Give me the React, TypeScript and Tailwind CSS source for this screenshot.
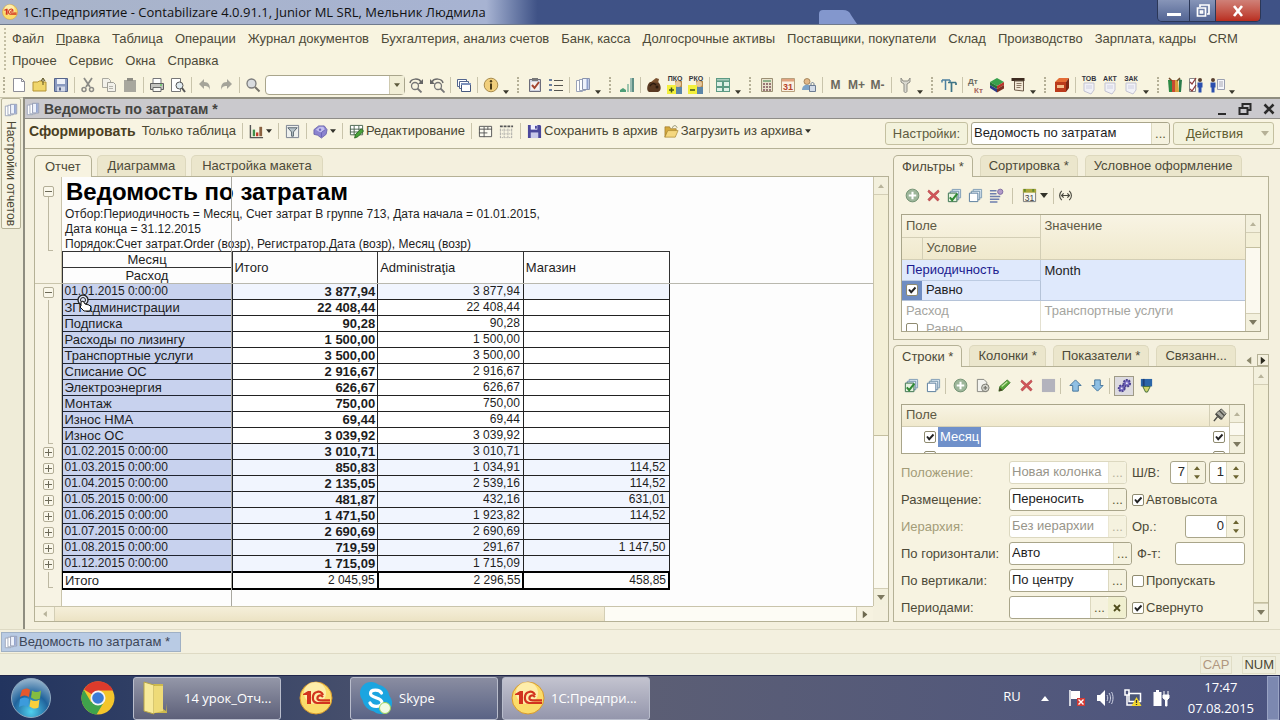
import React from "react";

type Kids = { children?: React.ReactNode };

const sheetIcon = (
  <>
    <path d="M1.5 3.5h6v11h-6z" fill="#fff" stroke="#9aa3b8" />
    <path d="M4.5 2.5h6v11h-6z" fill="#fff" stroke="#9aa3b8" />
    <path d="M7.5 1.5h7v11h-7z" fill="#eef2fb" stroke="#8a94ae" />
    <path d="M12.5 2v10" stroke="#8fa0cc" strokeWidth="2" />
  </>
);

const stackBack = (
  <>
    <path d="M5.5 1.5h9v9h-9z" fill="#dbe8f2" stroke="#7f9db5" />
    <path d="M3.5 3.5h9v9h-9z" fill="#eaf2f8" stroke="#6f8fa8" />
    <path d="M1.5 5.5h9v9h-9z" fill="#fff" stroke="#54799a" />
  </>
);

const person = (x: number, c: string) => (
  <>
    <circle cx={x} cy="3" r="2" fill="#5a4030" />
    <path d={`M${x - 2.5} 5.5h5v5h-1v5h-3v-5h-1z`} fill={c} />
  </>
);

const icons: Record<string, React.ReactNode> = {
  new: <><path d="M2.5 1.5h8l3 3v10h-11z" fill="#fff" stroke="#8d8d96" /><path d="M10.500 1.500v3h3" fill="none" stroke="#8d8d96" /></>,
  open: <><path d="M1 5h5l1-1h3v1h4v9H1z" fill="#f0d66b" stroke="#b39234" /><path d="M11 8V2M9 4l2-3 2 3" fill="none" stroke="#5c5322" /></>,
  save: <><path d="M1.500 1.500h13v13h-13z" fill="#8b9bc0" stroke="#56658c" /><path d="M4 2h8v5H4z" fill="#eef1f8" /><path d="M4 9.500h8v5H4z" fill="#d3d9e8" /><path d="M6 10.500h2v3H6z" fill="#56658c" /></>,
  cut: <><path d="M4 1l6 9M12 1L6 10" stroke="#8b8b86" strokeWidth="1.800" /><circle cx="4" cy="12.500" r="2" fill="none" stroke="#8b8b86" strokeWidth="1.500" /><circle cx="11.500" cy="12.500" r="2" fill="none" stroke="#8b8b86" strokeWidth="1.500" /></>,
  copy: <><path d="M1.500 1.500h6l2 2v7h-8z" fill="#f2f1ea" stroke="#aaa99f" /><path d="M6.500 5.500h6l2 2v7h-8z" fill="#f2f1ea" stroke="#a09f97" /><path d="M8 9.500h4M8 11.500h4" stroke="#b5b4ac" /></>,
  paste: <><path d="M2 3h12v12H2z" fill="#a8a79e" /><path d="M5 1h6v3H5z" fill="#8e8d85" /></>,
  print: <><path d="M4 1.500h8v5H4z" fill="#fff" stroke="#77777a" /><path d="M1.500 6.500h13v6h-13z" fill="#c3c3bf" stroke="#5f5f5f" /><path d="M4 10.500h8v4H4z" fill="#f8f8f3" stroke="#6a6a6a" /><path d="M11 8h2" stroke="#3c3" /></>,
  preview: <><path d="M1.500 1.500h9v13h-9z" fill="#fff" stroke="#777" /><circle cx="9.500" cy="8.500" r="3.500" fill="#dfeaf0" stroke="#555" /><path d="M12 11l3 4" stroke="#555" strokeWidth="2" /></>,
  undo: <><path d="M2 7l5-5v3c5 0 6 3 6 8-1-3-2-4-6-4v3z" fill="#a5a49a" /></>,
  redo: <><path d="M14 7L9 2v3c-5 0-6 3-6 8 1-3 2-4 6-4v3z" fill="#a5a49a" /></>,
  search: <><circle cx="6.500" cy="6.500" r="4.500" fill="#d9dcdf" stroke="#7c7c7c" strokeWidth="1.300" /><path d="M10 10l4.500 4.500" stroke="#77736a" strokeWidth="2" /></>,
  findNext: <><circle cx="7" cy="9" r="3.500" fill="none" stroke="#777" strokeWidth="1.300" /><path d="M9.500 11.500l4 4" stroke="#777" strokeWidth="1.800" /><path d="M2 6c1-5 9-5 11-1" fill="none" stroke="#6b6b6b" strokeWidth="1.500" /><path d="M15 2v5h-5z" fill="#666" /></>,
  findPrev: <><circle cx="9" cy="9" r="3.500" fill="none" stroke="#777" strokeWidth="1.300" /><path d="M11.500 11.500l4 4" stroke="#777" strokeWidth="1.800" /><path d="M14 6c-1-5-9-5-11-1" fill="none" stroke="#6b6b6b" strokeWidth="1.500" /><path d="M1 2v5h5z" fill="#666" /></>,
  windows: <><path d="M1.500 2.500h9v7h-9z" fill="#fff" stroke="#53658e" /><path d="M3.500 4.500h9v7h-9z" fill="#fff" stroke="#53658e" /><path d="M5.500 6.500h9v8h-9z" fill="#fff" stroke="#46587f" /><path d="M5 7h10" stroke="#7f93bd" strokeWidth="2" /></>,
  info: <><circle cx="8" cy="8" r="6.800" fill="#f1cf7c" stroke="#a98c4c" /><path d="M8 6.500v6" stroke="#4a3b17" strokeWidth="2" /><circle cx="8" cy="4.200" r="1.200" fill="#4a3b17" /></>,
  clipboard: <><path d="M2.500 2.500h11v12h-11z" fill="#cfd3df" stroke="#6c6c7a" /><path d="M5 1h6v3H5z" fill="#777" /><path d="M4 5h8v8H4z" fill="#f6f1ee" /><path d="M5 8l2.500 3L12 5" fill="none" stroke="#a3452f" strokeWidth="2" /></>,
  list: <><path d="M1 3h3M1 8h3M1 13h3" stroke="#6b7f9e" strokeWidth="2" /><path d="M6 3.500h9M6 8.500h9M6 13.500h9" stroke="#55554f" /></>,
  sheets: sheetIcon,
  chart: <><path d="M1 13l3-2 3 2v2H1z" fill="#4e9f78" /><path d="M8 7h2v8H8z" fill="#9fc6ae" /><path d="M11 1h4v14h-4z" fill="#5f8f86" /><path d="M11 1h2v14h-2z" fill="#9cbcb2" /></>,
  bag: <><path d="M4 5c-3 2-4 9-1 10h9c4-1 3-8 0-10z" fill="#5a3a22" /><path d="M5 5l5-4 3 1-1 4z" fill="#7a5230" /><path d="M4 9c2-3 4-3 6-1" stroke="#2c1a0d" fill="none" strokeWidth="1.500" /><circle cx="11" cy="10" r="1.500" fill="#2c1a0d" /></>,
  tableWin: <><path d="M1 1h14v14H1z" fill="#5c9a84" /><path d="M2 5h5v4H2zM9 5h5v4H9zM2 11h5v3H2zM9 11h5v3H9z" fill="#def0e6" /><path d="M2 2h12v1.500H2z" fill="#a9cdbd" /></>,
  calc: <><path d="M2.500 1.500h11v13h-11z" fill="#e9e3cd" stroke="#9b8f74" /><path d="M4 3h8v2H4z" fill="#8fb08a" /><path d="M5 6v8M8 6v8M11 6v8" stroke="#977" strokeDasharray="2 1" strokeWidth="2" /></>,
  calendar: <><path d="M1.500 1.500h13v13h-13z" fill="#faf1e2" stroke="#b9a07d" /><path d="M2 2h12v2.500H2z" fill="#e0a27e" /><text x="8" y="13" textAnchor="middle" fontSize="9" fontWeight="700" fill="#b8452a">31</text></>,
  userLock: <><circle cx="6" cy="4.500" r="3" fill="#e2b888" stroke="#8b6a3f" strokeWidth=".7" /><path d="M1 13c0-7 10-7 10 0z" fill="#7da4c8" /><path d="M8.500 8.500h6v6h-6z" fill="#d2dbe8" stroke="#6d7c92" /><path d="M10 8.500V7c0-2 3-2 3 0v1.500" fill="none" stroke="#6d7c92" /></>,
  wrench: <><path d="M4 1v4l3 2v7c0 2 3 2 3 0V7l3-2V1l-2 3H6z" fill="#d9d8cf" stroke="#8f8e86" /></>,
  tt: <><path d="M1 3h8M4.500 3v10M1 3v2.500M9 3v2.500" stroke="#4e80a0" strokeWidth="1.500" fill="none" /><path d="M7 5.500h8M10.500 5.500V15M15 5.500V8" stroke="#3e7486" strokeWidth="1.700" fill="none" /></>,
  books: <><path d="M1 5l7-4 7 4-7 4z" fill="#38a04c" /><path d="M1 5l7 4v3L1 8z" fill="#237436" /><path d="M1 8l7 4v3.500L1 11z" fill="#2a3a88" /><path d="M8 9l7-4v3l-7 4z" fill="#b9352b" /><path d="M8 12l7-4v3.500l-7 4z" fill="#7d2f22" /></>,
  report: <><path d="M1.500 2.500h13" stroke="#3d2a20" strokeWidth="3" /><path d="M4.500 4h9v10l-9-1z" fill="#f2e8d6" stroke="#6d5c4a" /><path d="M6.500 6.500h5M6.500 8.500h5M6.500 10.500h4" stroke="#8c7a66" /></>,
  ledger: <><path d="M1 5l4-4h10l-3 4z" fill="#e46c35" /><path d="M1 5h11v10H1z" fill="#bb3b1c" /><path d="M12 5l3-4v10l-3 4z" fill="#7d2714" /><path d="M3 8h7v3H3z" fill="#f4c08e" /></>,
  folders: <><path d="M1 3h4v12H2z" fill="#2e8a44" /><path d="M5 3h3v12H5z" fill="#c94b32" /><path d="M8 3h3l1 12H8z" fill="#d9a03c" /><path d="M12 2l3 1-1 12h-2z" fill="#2c7c4c" /><path d="M2 1l3 3M13 1l-3 3" stroke="#734b2b" strokeWidth="1.500" /></>,
  checkPerson: <><path d="M1.500 1.500h6v13h-6z" fill="#fff" stroke="#888" /><path d="M2 5l2 2 4-6M2 12l2 2 4-6" fill="none" stroke="#8c3b3b" strokeWidth="1.300" />{person(12, "#2b4fae")}</>,
  personDoc: <><path d="M8.500 2.500h7v10h-7z" fill="#f5f6fa" stroke="#9a9fb0" /><path d="M10 5h4M10 7h4M10 9h4" stroke="#a8a8b5" />{person(4, "#2b4fae")}</>,
  barChart: <><path d="M1.500 1v13.500H15" fill="none" stroke="#555" strokeWidth="1.500" /><path d="M4 6h2.500v7H4z" fill="#3f8f4b" /><path d="M7.500 9H10v4H7.500z" fill="#c03a2a" /><path d="M11 3h3v10h-3z" fill="#8a6140" /></>,
  filter: <><path d="M1.500 1.500h13v13h-13z" fill="#eef0ee" stroke="#777f8d" /><path d="M3 4h10l-4 4.500V13H7V8.500z" fill="#b7c3c9" stroke="#57646e" /></>,
  purple: <><path d="M1 6l5-4h6l3 4-1 5-5 4-4-3-4-1z" fill="#8b83cf" stroke="#5e57a4" strokeWidth=".8" /><path d="M3 6l4-3h4l2 3-4 3-3-1z" fill="#c3bfee" /><path d="M9 9v5M9 9l4-3" stroke="#6760b4" fill="none" /><circle cx="7.500" cy="6" r="1.300" fill="#6f67bd" /></>,
  edit: <><path d="M1.500 1.500h13v10h-13zM1 5.500h14M1 8.500h9M5.500 2v10M10.500 2v5" fill="#fff" stroke="#4b6450" /><path d="M6 15l1-4 6-6 2.500 2.500-6 6z" fill="#49a33a" stroke="#2b6a22" /></>,
  grid1: <><path d="M1.500 2.500h13v11h-13z" fill="#fbfaf0" stroke="#555" /><path d="M1 5.500h14M6.500 3v11M1 9.500h9M10.500 3v3" stroke="#555" /></>,
  grid2: <><path d="M1 2.500h14" stroke="#555" strokeWidth="2" strokeDasharray="3 1" /><path d="M1.500 5v10M5.500 5v10M9.500 5v10M13.500 5v10M1 6.500h14M1 10.500h14M1 14.500h14" stroke="#999" strokeDasharray="1 1" /></>,
  disk: <><path d="M1 1h13l1 1v13H1z" fill="#4b489c" /><path d="M4 1h7v5H4z" fill="#f2f2ff" /><path d="M4 9h8v6H4z" fill="#c8c8ea" /><path d="M8.500 2h2v3h-2z" fill="#4b489c" /></>,
  folderOpen: <><path d="M1 3h5l1 2h6v3H4l-3 6z" fill="#d5a93d" stroke="#97762a" strokeWidth=".7" /><path d="M1 14l3-7h11l-3 7z" fill="#f5d77e" stroke="#a5832e" strokeWidth=".7" /><path d="M9 4c1-3 4-3 5 0" fill="none" stroke="#8a8a6a" /></>,
  add: <><circle cx="8" cy="8" r="6.800" fill="#9db69a" stroke="#6f8f70" /><path d="M8 4v8M4 8h8" stroke="#fff" strokeWidth="2.200" /></>,
  del: <path d="M3 2l5 4.500L13 2l1 2-4 4 4 4-1.500 2L8 9.500 3.500 14 2 12l4-4-4-4z" fill="#d2565a" stroke="#a83b40" strokeWidth=".6" />,
  checkAll: <>{stackBack}<path d="M1.500 5.500h9v9h-9z" fill="#e6f2e2" stroke="#4c7f55" /><path d="M3 10l2.500 3L11 6" fill="none" stroke="#2f8a34" strokeWidth="2.200" /></>,
  uncheckAll: stackBack,
  rows: <><path d="M1 3h7M1 6h7M1 9h11M1 12h10M1 15h8" stroke="#6d7fae" strokeWidth="1.600" /><circle cx="12" cy="4" r="2.800" fill="#b29ac8" stroke="#7c6ba0" /></>,
  date: <><path d="M1.500 1.500h13v13h-13z" fill="#f7f6ee" stroke="#777" /><path d="M1 1h14v4H1z" fill="#a9a63a" /><path d="M3 1v3M12 1v3" stroke="#5f8a2b" strokeWidth="2" /><text x="8" y="13.500" textAnchor="middle" fontSize="9" fill="#444">31</text></>,
  range: <path d="M4 3c-3 3-3 7 0 10M12 3c3 3 3 7 0 10M4 8h8M6 5.800L3.800 8 6 10.200M10 5.800L12.200 8 10 10.200" fill="none" stroke="#4a4a40" strokeWidth="1.300" />,
  addDoc: <><path d="M2.500 1.500h7l3 3v10h-10z" fill="#f3f3ee" stroke="#85857f" /><circle cx="11" cy="10.500" r="4" fill="#d5d5cd" stroke="#77776f" /><path d="M11 8.500v4M9 10.500h4" stroke="#77776f" strokeWidth="1.400" /></>,
  pencil: <><path d="M2 14l1-5 8-7 3 3-8 8z" fill="#58a53a" stroke="#2f6b20" strokeWidth=".8" /><path d="M2 14l1-4 3 3z" fill="#4a3c24" /><path d="M5 9l6-5" stroke="#c4e6a4" strokeWidth="1.300" /></>,
  block: <path d="M1 1h14v14H1z" fill="#b3b3bd" />,
  up: <path d="M8 2l6 6h-3v6H5V8H2z" fill="#8fc0e4" stroke="#44749c" />,
  down: <path d="M8 14l6-6h-3V2H5v6H2z" fill="#8fc0e4" stroke="#44749c" />,
  gears: <><circle cx="10.500" cy="5.500" r="3.500" fill="#7c70c4" stroke="#4b4190" strokeWidth="2" strokeDasharray="2 1" /><circle cx="5" cy="11" r="3.200" fill="#7c70c4" stroke="#4b4190" strokeWidth="2" strokeDasharray="2 1" /><circle cx="10.500" cy="5.500" r="1" fill="#eceaf8" /><circle cx="5" cy="11" r="1" fill="#eceaf8" /></>,
  brush: <><path d="M2 1h12v8H2z" fill="#2b65a8" /><path d="M4 1h2v8H4z" fill="#1d3f78" /><path d="M4 9h8l-3 6H7z" fill="#cfd36b" stroke="#3d6a34" /></>,
  pin: <><path d="M5 5l5-4 5 5-4 5-2 1-5-5z" fill="#a9a9a0" stroke="#4c4c46" /><path d="M4 6l7 6M8 3l5 5" stroke="#4c4c46" strokeWidth="1.500" /><path d="M6 9l-4 5" stroke="#4c4c46" strokeWidth="1.500" /></>,
};

function Icon({ name, className = "size-4" }: { name: string; className?: string }) {
  return (
    <svg viewBox="0 0 16 16" className={`${className} shrink-0`} aria-hidden="true">
      {icons[name]}
    </svg>
  );
}

function Caret({ small, className = "" }: { small?: boolean; className?: string }) {
  return (
    <svg viewBox="0 0 8 5" className={`${small ? "h-1 w-1.5" : "h-[5px] w-2"} shrink-0 ${className}`} aria-hidden="true">
      <path d="M0 0h8L4 5z" fill="currentColor" />
    </svg>
  );
}

function Sep() {
  return <span className="h-4 w-px shrink-0 bg-[#c9c4ab]" />;
}

function TagIcon({ tag, name }: { tag: string; name: string }) {
  const minus = name === "rko";
  const doc = name === "doc";
  return (
    <svg viewBox="0 0 18 20" className="h-5 w-[18px] shrink-0" aria-hidden="true">
      {doc ? (
        <>
          <path d="M4 8h10v7l-3 4-7-3z" fill="#f1f1f6" stroke="#c3c3d2" />
          <path d="M6 11h6M6 13h6" stroke="#cfcfe0" />
        </>
      ) : (
        <>
          <path d="M9 6h7v13H9z" fill="#b58a4e" />
          <circle cx="12" cy="9" r="3" fill="#e7c79a" />
          <path d="M9 12h7v7H9z" fill="#5c86a8" />
          <path d="M1 10h9v9H1z" fill="#f3f03c" />
          <path d={minus ? "M3 15h5" : "M3 15h5M5.500 12.500v5"} stroke="#40551a" strokeWidth="1.500" />
        </>
      )}
      <text x="9" y="6" textAnchor="middle" fontSize="7" fontWeight="700" fill="#33333c">{tag}</text>
    </svg>
  );
}

const mainTools = (
  "| new open save / cut copy paste / print preview / undo redo / search [] findNext findPrev / windows / info v | " +
  "clipboard list / sheets v | chart / bag pko rko / tableWin v | calc calendar userLock / M M+ M- / wrench v | " +
  "tt / dtkt books report v | ledger / tov akt zak v | folders checkPerson personDoc v"
).split(" ");

function MainTool({ id, first }: { id: string; first: boolean }) {
  if (id === "/") return <span className="flex w-1.5 shrink-0 justify-center"><Sep /></span>;
  if (id === "|")
    return (
      <span className={`flex shrink-0 justify-center ${first ? "w-2" : "w-[13px]"}`}>
        <span className="h-4 w-0 border-l-2 border-dotted border-[#b5b097]" />
      </span>
    );
  if (id === "v")
    return (
      <button aria-label="Ещё" className="flex h-5 w-2.5 shrink-0 items-end justify-center pb-px text-[#3a382c]">
        <Caret small />
      </button>
    );
  if (id === "[]")
    return (
      <span className="ml-0.5 flex h-5 w-[140px] shrink-0 rounded-sm border border-[#a9a58c] bg-white">
        <input aria-label="Поиск" className="min-w-0 flex-1 bg-transparent px-1 outline-none" />
        <button aria-label="Список" className="flex w-[15px] items-center justify-center border-l border-[#cfcab0] bg-[#f1eed6] text-[#5d5a3c]">
          <Caret small />
        </button>
      </span>
    );
  const tags: Record<string, [string, string]> = {
    pko: ["ПКО", "pko"], rko: ["РКО", "rko"], tov: ["ТОВ", "doc"], akt: ["АКТ", "doc"], zak: ["ЗАК", "doc"],
  };
  return (
    <button aria-label={id} className="flex h-5 w-[21px] shrink-0 items-center justify-center text-[12px] font-bold text-[#6b685e]">
      {id[0] === "M" ? id : tags[id] ? (
        <TagIcon tag={tags[id][0]} name={tags[id][1]} />
      ) : id === "dtkt" ? (
        <svg viewBox="0 0 18 18" className="size-[18px]" aria-hidden="true">
          <text x="1" y="8" fontSize="8" fontWeight="700" fill="#6a6a62">Дт</text>
          <text x="7" y="17" fontSize="8" fontWeight="700" fill="#a5655c">Кт</text>
        </svg>
      ) : (
        <Icon name={id} />
      )}
    </button>
  );
}

function Tab({ children, active, wide }: Kids & { active?: boolean; wide?: boolean }) {
  return (
    <button
      role="tab"
      aria-selected={!!active}
      className={`shrink-0 whitespace-nowrap rounded-t-[5px] border border-b-0 text-[#4d4a38] ${wide ? "px-2.5" : "px-2"} ${
        active ? "relative -mb-px h-[22px] border-[#b5b196] bg-[#f7f3e1]" : "h-[21px] border-[#ddd8bd] bg-[#ebe6cc]"
      }`}
    >
      {children}
    </button>
  );
}

function Check({ label, defaultChecked, className = "" }: { label?: string; defaultChecked?: boolean; className?: string }) {
  return (
    <label className={`flex items-center gap-0.5 whitespace-nowrap text-[#4d4a38] ${className}`}>
      <span className="relative flex size-3 shrink-0">
        <input
          type="checkbox"
          aria-label={label ? undefined : "Использовать"}
          defaultChecked={defaultChecked}
          className="peer size-3 appearance-none rounded-[2px] border border-[#8f8b70] bg-white"
        />
        <svg viewBox="0 0 12 12" className="pointer-events-none absolute inset-0 hidden size-3 peer-checked:block">
          <path d="M3 5.500l2.200 2.700L9.500 3.500" fill="none" stroke="#222" strokeWidth="1.900" />
        </svg>
      </span>
      {label}
    </label>
  );
}

type FieldProps = { id: string; value: string; width: string; muted?: boolean; clear?: boolean; label?: string };

function Field({ id, value, width, muted, clear, label }: FieldProps) {
  return (
    <span className={`flex h-[23px] shrink-0 rounded-[3px] border bg-white ${width} ${muted ? "border-[#dcd8c0]" : "border-[#a9a58a]"}`}>
      <input
        id={id}
        aria-label={label}
        defaultValue={value}
        disabled={muted}
        className={`min-w-0 flex-1 bg-transparent pl-0.5 pb-0.5 outline-none ${muted ? "text-[#98958a]" : "text-[#1c1c1c]"}`}
      />
      <button
        aria-label="Выбрать"
        className={`w-[18px] rounded-r-[3px] border-l bg-[#f5f2df] ${muted ? "border-[#ebe7d2] text-[#b5b19c]" : "border-[#dcd8bf] text-[#5d5a33]"}`}
      >
        ...
      </button>
      {clear && (
        <button aria-label="Очистить" className="flex w-[18px] items-center justify-center rounded-r-[3px] bg-[#f0efcf]">
          <svg viewBox="0 0 8 8" className="size-2"><path d="M1 1l6 6M7 1L1 7" stroke="#4f4d1c" strokeWidth="1.800" /></svg>
        </button>
      )}
    </span>
  );
}

function Spin({ label, value, width }: { label: string; value: string; width: string }) {
  return (
    <span className={`flex h-[23px] shrink-0 rounded-[3px] border border-[#a9a58a] bg-white ${width}`}>
      <input aria-label={label} defaultValue={value} className="min-w-0 flex-1 bg-transparent pb-0.5 pr-0.5 text-right text-[#2a2a2a] outline-none" />
      <span className="flex w-[18px] flex-col items-center justify-evenly rounded-r-[3px] border-l border-[#dcd8bf] bg-[#f5f2df] text-[#6b6430]">
        <button aria-label="Больше" className="flex rotate-180"><Caret small /></button>
        <button aria-label="Меньше" className="flex"><Caret small /></button>
      </span>
    </span>
  );
}

function FormRow({ label, muted, id, children }: Kids & { label: string; muted?: boolean; id: string }) {
  return (
    <div className="flex h-[27px] items-center">
      <label htmlFor={id} className={`w-[108px] shrink-0 whitespace-nowrap ${muted ? "text-[#a39c78]" : "text-[#4d4a38]"}`}>{label}</label>
      {children}
    </div>
  );
}

function Side({ children }: Kids) {
  return <div className="ml-[5px] flex flex-1 items-center justify-between whitespace-nowrap text-[#4d4a38]">{children}</div>;
}

const rows: [string, string, string, string, "open" | "leaf" | "last" | "closed"][] = [
  ["01.01.2015 0:00:00", "3 877,94", "3 877,94", "", "open"],
  ["ЗП администрации", "22 408,44", "22 408,44", "", "leaf"],
  ["Подписка", "90,28", "90,28", "", "leaf"],
  ["Расходы по лизингу", "1 500,00", "1 500,00", "", "leaf"],
  ["Транспортные услуги", "3 500,00", "3 500,00", "", "leaf"],
  ["Списание ОС", "2 916,67", "2 916,67", "", "leaf"],
  ["Электроэнергия", "626,67", "626,67", "", "leaf"],
  ["Монтаж", "750,00", "750,00", "", "leaf"],
  ["Износ НМА", "69,44", "69,44", "", "leaf"],
  ["Износ ОС", "3 039,92", "3 039,92", "", "last"],
  ["01.02.2015 0:00:00", "3 010,71", "3 010,71", "", "closed"],
  ["01.03.2015 0:00:00", "850,83", "1 034,91", "114,52", "closed"],
  ["01.04.2015 0:00:00", "2 135,05", "2 539,16", "114,52", "closed"],
  ["01.05.2015 0:00:00", "481,87", "432,16", "631,01", "closed"],
  ["01.06.2015 0:00:00", "1 471,50", "1 923,82", "114,52", "closed"],
  ["01.07.2015 0:00:00", "2 690,69", "2 690,69", "", "closed"],
  ["01.08.2015 0:00:00", "719,59", "291,67", "1 147,50", "closed"],
  ["01.12.2015 0:00:00", "1 715,09", "1 715,09", "", "closed"],
];

function Toggle({ open }: { open?: boolean }) {
  return (
    <button aria-label={open ? "Свернуть" : "Развернуть"} className="flex size-[11px] shrink-0 items-center justify-center rounded-[2px] border border-[#b3ae97] bg-[#faf7ea]">
      <svg viewBox="0 0 7 7" className="size-[7px]"><path d={open ? "M0 3.500h7" : "M0 3.500h7M3.500 0v7"} stroke="#6d6a58" /></svg>
    </button>
  );
}

function Outline() {
  return (
    <div className="w-[27px] shrink-0 border-r border-[#c9c4ab] bg-[#f7f3e4]">
      <div className="flex h-[107px] flex-col items-center border-b border-[#c9c4ab] pt-[9px]">
        <Toggle open />
        <span className="ml-1 h-[54px] w-[5px] border-b border-l border-[#bdb8a2]" />
      </div>
      {rows.map((r, i) => (
        <div key={i} className="flex h-4 items-center justify-center">
          {r[4] === "open" || r[4] === "closed" ? (
            <Toggle open={r[4] === "open"} />
          ) : (
            <span className={`ml-1 h-4 w-[5px] border-l border-[#bdb8a2] ${r[4] === "last" ? "border-b" : ""}`} />
          )}
        </div>
      ))}
      <div className="flex h-4 items-center justify-center">
        <span className="ml-1 h-4 w-[5px] border-b border-l border-[#bdb8a2]" />
      </div>
    </div>
  );
}

function Sheet() {
  return (
    <div className="relative min-w-0 flex-1 overflow-hidden bg-[#fdfdfd] text-[12px] text-[#1d1d1d]">
      <h1 className="h-[30px] pl-1 text-[24px] font-bold leading-[30px] text-black">Ведомость по затратам</h1>
      <p className="h-11 whitespace-pre-line pl-[3px] leading-[15px]">
        {"Отбор:Периодичность = Месяц, Счет затрат В группе 713, Дата начала = 01.01.2015,\nДата конца = 31.12.2015\nПорядок:Счет затрат.Order (возр), Регистратор.Дата (возр), Месяц (возр)"}
      </p>
      <table className="-ml-px w-[609px] table-fixed border-collapse leading-[15px]">
        <colgroup><col className="w-[170px]" /><col /><col /><col /></colgroup>
        <thead>
          <tr className="h-4">
            <th className="border border-[#333] p-0 text-center text-[13px] font-normal">Месяц</th>
            <th rowSpan={2} className="border border-[#333] p-0 pl-0.5 text-left text-[13px] font-normal">Итого</th>
            <th rowSpan={2} className="border border-[#333] p-0 pl-0.5 text-left text-[13px] font-normal">Administraţia</th>
            <th rowSpan={2} className="border border-[#333] p-0 pl-0.5 text-left text-[13px] font-normal">Магазин</th>
          </tr>
          <tr className="h-4"><th className="border border-[#333] p-0 text-center text-[13px] font-normal">Расход</th></tr>
        </thead>
        <tbody>
          {rows.map((r, i) => {
            const group = r[4] === "open" || r[4] === "closed";
            const tint = group ? "bg-[#f1f5fe]" : "bg-white";
            return (
              <tr key={i} className="h-4">
                <td className={`whitespace-nowrap border border-r-2 border-[#20242f] bg-[#c8d2ee] p-0 pl-0.5 ${group ? "text-[12px]" : "text-[13px]"}`}>{r[0]}</td>
                <td className={`border border-[#222] p-0 pr-0.5 text-right text-[13px] font-bold ${tint}`}>{r[1]}</td>
                <td className={`border border-[#222] p-0 pr-[3px] text-right text-[12px] ${tint}`}>{r[2]}</td>
                <td className={`border border-[#222] p-0 pr-[3px] text-right text-[12px] ${tint}`}>{r[3]}</td>
              </tr>
            );
          })}
          <tr className="h-4">
            <td className="border-2 border-black bg-white p-0 pl-0.5 text-[13px]">Итого</td>
            <td className="border-2 border-black p-0 pr-0.5 text-right">2 045,95</td>
            <td className="border-2 border-black p-0 pr-0.5 text-right">2 296,55</td>
            <td className="border-2 border-black p-0 pr-0.5 text-right">458,85</td>
          </tr>
        </tbody>
      </table>
      <span className="absolute inset-y-0 left-[169px] w-px bg-[#a9a8a0]" />
      <span className="absolute inset-x-0 top-[106px] h-px bg-[#b9b8ae]" />
      <svg viewBox="0 0 18 20" className="absolute left-[14px] top-[117px] h-5 w-[18px]" aria-hidden="true">
        <circle cx="7" cy="6" r="5" fill="#dfe6f8" stroke="#222" strokeWidth="1.300" />
        <circle cx="7" cy="6" r="2.500" fill="none" stroke="#222" />
        <path d="M5 8l2-1 2 3 4 1 2 2-1 4H8l-4-4 1-1z" fill="#fff" stroke="#111" />
      </svg>
    </div>
  );
}

function VBar({ thumb, className = "" }: { thumb?: string; className?: string }) {
  return (
    <div className={`flex w-[15px] shrink-0 flex-col border-l border-[#c9c4ab] bg-[#fbf9ef] ${className}`}>
      <button aria-label="Вверх" className="flex h-[18px] shrink-0 items-center justify-center border-b border-[#d3ceb5] bg-[#f3f0dd] text-[#b8b39a]">
        <Caret small className="rotate-180" />
      </button>
      {thumb && <span className={`shrink-0 border-b border-[#c4bf9f] bg-[#f3efd6] ${thumb}`} />}
      <button aria-label="Вниз" className="mt-auto flex h-[18px] shrink-0 items-center justify-center border-t border-[#d3ceb5] bg-[#f3f0dd] text-[#7d7960]">
        <Caret />
      </button>
    </div>
  );
}

function ReportPane() {
  return (
    <section className="flex min-w-0 flex-1 flex-col">
      <div role="tablist" className="flex gap-[5px]">
        <Tab wide active>Отчет</Tab><Tab wide>Диаграмма</Tab><Tab wide>Настройка макета</Tab>
      </div>
      <div className="flex flex-1 flex-col border border-[#b5b196]">
        <div className="flex flex-1">
          <Outline />
          <Sheet />
          <VBar thumb="h-[241px]" />
        </div>
        <div className="mr-[15px] flex h-[15px] border-t border-[#c9c4ab] bg-[#fdfcf5]">
          <button aria-label="Влево" className="flex w-[19px] items-center justify-center bg-[#f6f2e0] text-[#b8b39a]"><Caret small className="rotate-90" /></button>
          <span className="w-[551px] border-x border-[#d3ceb5] bg-linear-to-b from-[#f5efda] to-[#ece3c4]" />
          <button aria-label="Вправо" className="ml-auto flex w-[17px] items-center justify-center border-l border-[#d3ceb5] bg-[#f6f2e0] text-[#6d694f]"><Caret className="-rotate-90" /></button>
        </div>
      </div>
    </section>
  );
}

function IconButton({ name, pressed }: { name: string; pressed?: boolean }) {
  return (
    <button aria-label={name} className={`flex size-5 shrink-0 items-center justify-center ${pressed ? "border border-[#9f9a86] bg-[#dddbe0]" : ""}`}>
      <Icon name={name} className="size-[15px]" />
    </button>
  );
}

function FilterPanel() {
  return (
    <>
      <div role="tablist" className="flex gap-[7px]">
        <Tab active>Фильтры *</Tab><Tab>Сортировка *</Tab><Tab>Условное оформление</Tab>
      </div>
      <div className="border border-[#b5b196] bg-[#f7f3e1] px-[7px] pb-[7px]">
        <div className="flex h-[37px] items-center gap-px pl-px">
          <IconButton name="add" /><IconButton name="del" /><IconButton name="checkAll" /><IconButton name="uncheckAll" /><IconButton name="rows" />
          <span className="w-1" /><Sep /><span className="w-1" />
          <IconButton name="date" /><Caret className="mr-1 text-[#33322a]" /><Sep />
          <IconButton name="range" />
        </div>
        <div className="flex h-[118px] overflow-hidden border border-[#a9a58a] bg-white">
          <table className="h-[126px] flex-1 table-fixed border-collapse text-left">
            <colgroup><col className="w-5" /><col className="w-[118px]" /><col /></colgroup>
            <thead className="bg-linear-to-b from-[#f8f4e4] to-[#f0e9cd] text-[#5d5944]">
              <tr className="h-[22px]">
                <th colSpan={2} className="border-b border-r border-[#d3ceb5] p-0 pl-1 font-normal">Поле</th>
                <th rowSpan={2} className="border-b border-[#d3ceb5] p-0 pl-1 pt-[3px] align-top font-normal">Значение</th>
              </tr>
              <tr className="h-[22px]"><th className="border-b border-r border-[#d3ceb5] p-0" /><th className="border-b border-r border-[#d3ceb5] p-0 pl-1 font-normal">Условие</th></tr>
            </thead>
            <tbody>
              <tr className="h-[21px] bg-[#dfe9fc]">
                <td colSpan={2} className="border-b border-r border-[#bccbe2] p-0 pl-1 text-[#1b1b8f]">Периодичность</td>
                <td rowSpan={2} className="border-b border-[#b5c3d8] p-0 pl-1 pt-[3px] align-top text-[#222]">Month</td>
              </tr>
              <tr className="h-5 bg-[#dfe9fc]">
                <td className="border-b border-[#b5c3d8] bg-[#6f8dc2] p-0"><Check defaultChecked className="justify-center" /></td>
                <td className="border-b border-r border-[#b5c3d8] p-0 pl-1 text-[#222]">Равно</td>
              </tr>
              <tr className="h-[21px] text-[#a5a5a0]">
                <td colSpan={2} className="border-r border-[#e3e0d0] p-0 pl-1">Расход</td>
                <td rowSpan={2} className="p-0 pl-1 pt-0.5 align-top">Транспортные услуги</td>
              </tr>
              <tr className="h-5 text-[#a5a5a0]"><td className="p-0 pt-0.5 align-top"><Check className="justify-center" /></td><td className="border-r border-[#e3e0d0] p-0 pl-1 align-top">Равно</td></tr>
            </tbody>
          </table>
          <VBar thumb="h-[15px]" />
        </div>
      </div>
    </>
  );
}

function RowsPanel() {
  return (
    <>
      <div role="tablist" className="mt-[5px] flex gap-[7px]">
        <Tab active>Строки *</Tab><Tab>Колонки *</Tab><Tab>Показатели *</Tab><Tab>Связанн...</Tab>
        <span className="ml-auto flex items-end gap-1">
          <button aria-label="Назад" className="flex h-3 w-2 items-center text-[#8c886c]"><Caret className="rotate-90" /></button>
          <button aria-label="Вперёд" className="flex size-3 items-center justify-center border border-[#b5b196] text-[#2c2b20]"><Caret className="-rotate-90" /></button>
        </span>
      </div>
      <div className="flex flex-1 border border-[#b5b196] bg-[#f7f3e1]">
        <div className="min-w-0 flex-1 pl-[7px] pr-2">
          <div className="flex h-[37px] items-center gap-0.5">
            <IconButton name="checkAll" /><IconButton name="uncheckAll" /><Sep /><span />
            <IconButton name="add" /><IconButton name="addDoc" /><IconButton name="pencil" /><IconButton name="del" /><IconButton name="block" />
            <Sep /><span /><IconButton name="up" /><IconButton name="down" /><Sep /><span />
            <IconButton name="gears" pressed /><IconButton name="brush" />
          </div>
          <div className="flex h-[50px] overflow-hidden border border-[#a9a58a] bg-white">
            <table className="flex-1 table-fixed border-collapse text-left">
              <colgroup><col /><col className="w-5" /></colgroup>
              <thead className="bg-linear-to-b from-[#f8f4e4] to-[#f0e9cd] text-[#5d5944]">
                <tr className="h-[21px]">
                  <th className="border-b border-[#d3ceb5] p-0 pl-1 font-normal">Поле</th>
                  <th className="border-b border-l border-[#d3ceb5] p-0 pl-0.5"><Icon name="pin" className="size-[15px]" /></th>
                </tr>
              </thead>
              <tbody>
                <tr className="h-5">
                  <td className="p-0 pl-[22px]">
                    <div className="flex items-center">
                      <Check defaultChecked />
                      <span className="ml-0.5 bg-[#6f90ca] px-0.5 leading-5 text-white">Месяц</span>
                    </div>
                  </td>
                  <td className="p-0"><Check defaultChecked className="justify-center" /></td>
                </tr>
                <tr className="h-5"><td className="p-0 pl-[22px] pt-1 align-top"><Check /></td><td className="p-0 pt-1 align-top"><Check className="justify-center" /></td></tr>
              </tbody>
            </table>
            <VBar />
          </div>
          <div className="mt-[5px]">
            <FormRow id="pos" label="Положение:" muted>
              <Field id="pos" value="Новая колонка" width="w-[118px]" muted />
              <Side>Ш/В:<span className="flex gap-[3px]"><Spin label="Ширина" value="7" width="w-9" /><Spin label="Высота" value="1" width="w-9" /></span></Side>
            </FormRow>
            <FormRow id="place" label="Размещение:">
              <Field id="place" value="Переносить" width="w-[118px]" />
              <Side><Check label="Автовысота" defaultChecked /></Side>
            </FormRow>
            <FormRow id="hier" label="Иерархия:" muted>
              <Field id="hier" value="Без иерархии" width="w-[118px]" muted />
              <Side>Ор.:<Spin label="Ориентация" value="0" width="w-[60px]" /></Side>
            </FormRow>
            <FormRow id="hor" label="По горизонтали:">
              <Field id="hor" value="Авто" width="w-[123px]" />
              <Side><label htmlFor="fmt">Ф-т:</label><input id="fmt" className="h-[23px] w-[70px] rounded-[3px] border border-[#a9a58a] bg-white px-1 outline-none" /></Side>
            </FormRow>
            <FormRow id="ver" label="По вертикали:">
              <Field id="ver" value="По центру" width="w-[118px]" />
              <Side><Check label="Пропускать" /></Side>
            </FormRow>
            <FormRow id="per" label="Периодами:">
              <Field id="per" value="" width="w-[118px]" clear />
              <Side><Check label="Свернуто" defaultChecked /></Side>
            </FormRow>
          </div>
        </div>
        <VBar thumb="flex-1" />
      </div>
    </>
  );
}

function OneC({ className }: { className: string }) {
  return (
    <svg viewBox="0 0 34 34" className={`${className} shrink-0`} aria-hidden="true">
      <circle cx="17" cy="17" r="16" fill="#fbdc6a" stroke="#d99a2c" />
      <circle cx="16" cy="12" r="11" fill="#fff3c0" opacity=".75" />
      <path d="M4 13l5-3h3v13H8V14H4z" fill="#d2331f" />
      <path d="M24 14c-1-3-4-4-6-3-5 1-6 10 0 11h13M24 16c-3-3-6-1-5.500 2 .5 1 1.500 1.300 3 1.300h9.500" fill="none" stroke="#d2331f" strokeWidth="2.200" />
    </svg>
  );
}

function TitleBar() {
  return (
    <header className="relative flex h-[25px] items-center border-b border-[#6f7a8c] bg-linear-to-r from-[#a9b4c9] from-0% via-[#a7b3d2] via-38% to-[#3f5286] to-42% pl-0.5 font-['Open_Sans','Noto_Sans',sans-serif] text-[13px] text-[#111]">
      <svg viewBox="0 0 38 14" className="absolute bottom-0 left-[64%] h-3.5 w-[38px]" aria-hidden="true">
        <path d="M0 4q0-4 4-4h20q6 0 8 5l6 9H0z" fill="#8397cd" />
      </svg>
      <OneC className="size-4" />
      <span className="ml-[5px] whitespace-nowrap">1С:Предприятие - Contabilizare 4.0.91.1, Junior ML SRL, Мельник Людмила</span>
      <div className="ml-auto mr-[19px] flex h-[22px] self-start overflow-hidden rounded-b-[5px] border border-t-0 border-[#2b3757]">
        <button aria-label="Свернуть окно" className="flex w-8 items-end justify-center border-r border-[#2b3757] bg-linear-to-b from-[#8795b8] to-[#526493] pb-[5px]"><span className="h-[3px] w-3.5 bg-white" /></button>
        <button aria-label="Восстановить" className="flex w-[26px] items-center justify-center border-r border-[#2b3757] bg-linear-to-b from-[#8795b8] to-[#526493]">
          <svg viewBox="0 0 16 16" className="size-4"><path d="M5 4V2h9v9h-2M2.500 5h8v8h-8zM5.500 8h2v2h-2z" fill="none" stroke="#fff" strokeWidth="1.700" /></svg>
        </button>
        <button aria-label="Закрыть" className="flex w-11 items-center justify-center bg-linear-to-b from-[#cf8078] to-[#b92b1e]">
          <svg viewBox="0 0 12 12" className="size-3"><path d="M2 1l8 10M10 1L2 11" stroke="#fff" strokeWidth="2.600" /></svg>
        </button>
      </div>
    </header>
  );
}

const menu = [
  "Файл", "Правка", "Таблица", "Операции", "Журнал документов", "Бухгалтерия, анализ счетов", "Банк, касса", "Долгосрочные активы",
  "Поставщики, покупатели", "Склад", "Производство", "Зарплата, кадры", "CRM", "Прочее", "Сервис", "Окна", "Справка",
];

function TaskButton({ children, className, wide }: Kids & { className: string; wide?: boolean }) {
  return (
    <button className={`flex h-[43px] w-[148px] items-center whitespace-nowrap rounded-[3px] border border-[#b9bdcc] pl-2 text-[13px] text-white ${wide ? "gap-3.5" : "gap-1.5"} ${className}`}>
      {children}
    </button>
  );
}

function TaskBar() {
  return (
    <footer className="flex h-[45px] items-center border-t border-[#20264a] bg-linear-to-r from-[#22345f] via-[#5d5f73] via-45% to-[#4c5480] font-['Open_Sans','Noto_Sans',sans-serif] text-white">
      <button aria-label="Пуск" className="ml-2.5">
        <svg viewBox="0 0 42 42" className="size-[42px]">
          <defs><radialGradient id="orb" cx=".5" cy=".85" r=".9"><stop offset="0" stopColor="#4fd0ee" /><stop offset=".5" stopColor="#20639c" /><stop offset="1" stopColor="#a9c2d6" /></radialGradient></defs>
          <circle cx="21" cy="21" r="19.500" fill="url(#orb)" stroke="#8fa9c0" />
          <path d="M12 13c3-2 6-2 8 0l-1 7c-3-2-6-2-9 0z" fill="#e5582b" />
          <path d="M22 13.500c3 2 6 2 9 0l-1 8c-3 2-6 1-9-1z" fill="#85bd3f" />
          <path d="M10 22c3-2 6-2 9 0l-1 8c-3-2-6-2-9 0z" fill="#3c9bdc" />
          <path d="M20.500 22.500c3 2 6 2 9 0l-1 8c-3 2-6 1-9-1z" fill="#f8cf3c" />
        </svg>
      </button>
      <button aria-label="Chrome" className="ml-[29px]">
        <svg viewBox="0 0 34 34" className="size-[34px]">
          <circle cx="17" cy="17" r="16.500" fill="#f3c52c" />
          <path d="M17 17L3 8.500A16.500 16.500 0 0 1 32 9.500H17z" fill="#dc3b2c" />
          <path d="M17 17l-7 4L2.800 8.700A16.500 16.500 0 0 0 15.500 33.500L23 21z" fill="#3fa34c" />
          <circle cx="17" cy="17" r="7.500" fill="#f4f4f4" /><circle cx="17" cy="17" r="5.800" fill="#3a7bd5" />
        </svg>
      </button>
      <TaskButton wide className="ml-[18px] bg-linear-to-b from-[#9497a8] to-[#5d6079]">
        <svg viewBox="0 0 28 34" className="h-[34px] w-7 shrink-0"><path d="M10 3h11v25l3 2v-8l1 10H10z" fill="#cdb94d" /><path d="M2 1l10 3v29L2 30z" fill="#f7ea9b" stroke="#b7a446" /><path d="M12 5h9v25l-9 2z" fill="#eedb78" /></svg>
        14 урок_Отч...
      </TaskButton>
      <button aria-label="1С" className="ml-[18px]"><OneC className="size-[34px]" /></button>
      <TaskButton className="ml-[17px] bg-linear-to-b from-[#8a8da1] to-[#5a6385]">
        <svg viewBox="0 0 34 34" className="size-[34px] shrink-0">
          <circle cx="12" cy="12" r="11" fill="#1ba5e0" /><circle cx="22" cy="22" r="11" fill="#1ba5e0" /><circle cx="17" cy="17" r="13.500" fill="#1ba5e0" />
          <path d="M22.500 12c-2-4-11-4-11 .5 0 5 11.500 3.500 11.500 9 0 5-10 5-12 .5" fill="none" stroke="#fff" strokeWidth="3.200" strokeLinecap="round" />
          <circle cx="26" cy="27" r="5.500" fill="#f2fbe4" stroke="#9bd25b" />
        </svg>
        Skype
      </TaskButton>
      <TaskButton className="ml-1 bg-linear-to-b from-[#c3c3cf] to-[#9496ac]">
        <OneC className="size-[34px]" />1С:Предпри...
      </TaskButton>
      <div className="ml-auto flex h-full items-center">
        <span className="pb-1 text-[13px]">RU</span>
        <button aria-label="Скрытые значки" className="ml-5"><Caret className="rotate-180" /></button>
        <svg viewBox="0 0 18 18" className="ml-[19px] size-[18px]"><path d="M2 1v16" stroke="#fff" strokeWidth="1.500" /><path d="M3 2h9v8H3z" fill="#fff" /><path d="M9 9h8v8H9z" fill="#d43a34" /><path d="M10.500 10.500l5 5M15.500 10.500l-5 5" stroke="#fff" strokeWidth="1.400" /></svg>
        <svg viewBox="0 0 18 18" className="ml-2.5 size-[18px]"><path d="M1 6h3l5-5v16l-5-5H1z" fill="#fff" /><path d="M11 6c1 2 1 4 0 6M13 4c2 3 2 7 0 10M15.500 3c2 3 2 9 0 12" fill="none" stroke="#cfd3e4" /></svg>
        <svg viewBox="0 0 18 18" className="ml-2.5 size-[18px]"><path d="M5 4.500h11.500v8H5z" fill="#4a5678" stroke="#fff" strokeWidth="1.500" /><path d="M1 1h4v5H1zM3 6v10h6" fill="none" stroke="#fff" strokeWidth="1.500" /><path d="M12.500 8l5 9h-10z" fill="#f3d82e" /><path d="M12.500 11v3M12.500 15v1" stroke="#333" strokeWidth="1.300" /></svg>
        <svg viewBox="0 0 18 18" className="ml-2.5 size-[18px]"><path d="M4 1h3v2h2.500v14h-8V3H4z" fill="#fff" /><path d="M12 2v4M16 2v4M11 6h6v3l-2 2v6h-1.500v-6l-2.500-2z" fill="#fff" stroke="#fff" /></svg>
        <div className="ml-[18px] text-center text-[13px] leading-[21px]"><div>17:47</div><div>07.08.2015</div></div>
        <button aria-label="Показать рабочий стол" className="ml-[13px] mr-px h-full w-3 border border-[#9aa4c4] bg-[#7c88b0]" />
      </div>
    </footer>
  );
}

function CommandButton({ icon, caret, children }: Kids & { icon?: string; caret?: boolean }) {
  return (
    <button aria-label={children ? undefined : icon} className="flex shrink-0 items-center gap-0.5 whitespace-nowrap text-[#4a4733]">
      {icon && <Icon name={icon} className="size-[15px]" />}
      {children}
      {caret && <Caret small className="text-[#33322a]" />}
    </button>
  );
}

export default function App() {
  return (
    <div className="flex min-h-screen flex-col overflow-hidden bg-[#f4f0de] font-['Liberation_Sans',Arial,sans-serif] text-[13px] leading-[16px]">
      <TitleBar />
      <div className="h-[47px] bg-[#f8f4e0] pl-1 pt-[3px]">
        <nav className="flex h-[42px] flex-wrap content-start gap-x-3 border-l-2 border-dotted border-[#c4bfa4] pl-1.5 text-[#4d4a38]">
          {menu.map((m) => (
            <a key={m} href="#" className="flex h-[22px] items-center whitespace-nowrap">
              {m === "Правка" ? <span><u>П</u>равка</span> : m}
            </a>
          ))}
        </nav>
      </div>
      <div className="flex h-[25px] items-center bg-[#f8f4e0]">
        {mainTools.map((t, i) => <MainTool key={i} id={t} first={i === 0} />)}
      </div>

      <div className="flex flex-1">
        <aside className="w-[23px] shrink-0 border-t border-[#c9c4ab] bg-[#efecd8]">
          <button className="ml-px flex h-[131px] w-5 flex-col items-center gap-1 rounded-[2px] border border-[#b5b196] bg-[#f6f3e2] pt-1 text-[12px] text-[#4a4733]">
            <Icon name="sheets" className="size-[14px]" />
            <span className="whitespace-nowrap [writing-mode:vertical-rl]">Настройки отчетов</span>
          </button>
        </aside>
        <main className="flex min-w-0 flex-1 flex-col border-l-2 border-t-2 border-[#8f8d80]">
          <div className="flex h-5 items-center gap-1 border-b border-[#8f8d88] bg-[#cac9cd] pl-px pr-1">
            <Icon name="sheets" className="size-[14px]" />
            <h2 className="text-[14px] font-bold text-[#44443f]">Ведомость по затратам *</h2>
            <div className="ml-auto flex items-center gap-2.5 text-[#2b2b2b]">
              <button aria-label="Свернуть" className="flex h-3 w-2.5 items-end"><span className="h-0.5 w-2 bg-[#2b2b2b]" /></button>
              <button aria-label="Восстановить"><svg viewBox="0 0 14 14" className="size-3.5"><path d="M4.500 5V2h8v6h-3M1.500 6h8v6h-8z" fill="none" stroke="currentColor" strokeWidth="2" /></svg></button>
              <button aria-label="Закрыть"><svg viewBox="0 0 14 14" className="size-3.5"><path d="M2.500 2.500l9 9M11.500 2.500l-9 9" stroke="currentColor" strokeWidth="2.600" /></svg></button>
            </div>
          </div>
          <div className="flex h-[30px] items-center border-b border-[#b5b196] bg-[#f8f4e2] pl-1">
            <div className="flex h-6 items-center gap-1.5 self-start">
              <button className="text-[14px] font-bold text-[#4a3f22]">Сформировать</button>
              <CommandButton>Только таблица</CommandButton>
              <Sep />
              <CommandButton icon="barChart" caret />
              <Sep />
              <CommandButton icon="filter" />
              <Sep />
              <CommandButton icon="purple" caret />
              <Sep />
              <CommandButton icon="edit">Редактирование</CommandButton>
              <Sep />
              <CommandButton icon="grid1" />
              <CommandButton icon="grid2" />
              <Sep />
              <CommandButton icon="disk">Сохранить в архив</CommandButton>
              <CommandButton icon="folderOpen" caret>Загрузить из архива</CommandButton>
            </div>
            <div className="ml-auto flex items-center gap-[3px] pr-1.5">
              <button className="h-[23px] w-[83px] rounded-[3px] border border-[#c4c0a0] bg-[#f3f2dc] text-[#5f5c40]">Настройки:</button>
              <Field id="variant" label="Вариант настроек" value="Ведомость по затратам" width="w-[199px]" />
              <button className="flex h-[23px] w-[101px] items-center rounded-[3px] border border-[#c4c0a0] bg-[#f3f2dc] pl-3 pr-1 text-[#5f5c30]">
                Действия<Caret className="ml-auto text-[#b5b196]" />
              </button>
            </div>
          </div>
          <div className="flex flex-1 gap-1 pb-[7px] pl-[9px] pr-[11px] pt-1.5">
            <ReportPane />
            <section className="flex w-[376px] shrink-0 flex-col">
              <FilterPanel />
              <RowsPanel />
            </section>
          </div>
        </main>
      </div>

      <div className="flex h-6 items-center border-t border-[#dedac4] bg-[#f3f0df]">
        <button className="ml-px flex h-5 items-center gap-px border border-[#9fb0c4] bg-[#b9cbe4] pl-0.5 pr-2.5 text-[#3c4658]">
          <Icon name="sheets" className="size-[14px]" />Ведомость по затратам *
        </button>
      </div>
      <div className="flex h-[22px] items-center justify-end gap-2.5 border-t border-[#dedac4] bg-[#efeedd] pr-1">
        <span className="border border-[#e0ddc6] px-0.5 text-[#b0977f]">CAP</span>
        <span className="border border-[#e0ddc6] px-px text-[#4a4733]">NUM</span>
      </div>
      <TaskBar />
    </div>
  );
}
